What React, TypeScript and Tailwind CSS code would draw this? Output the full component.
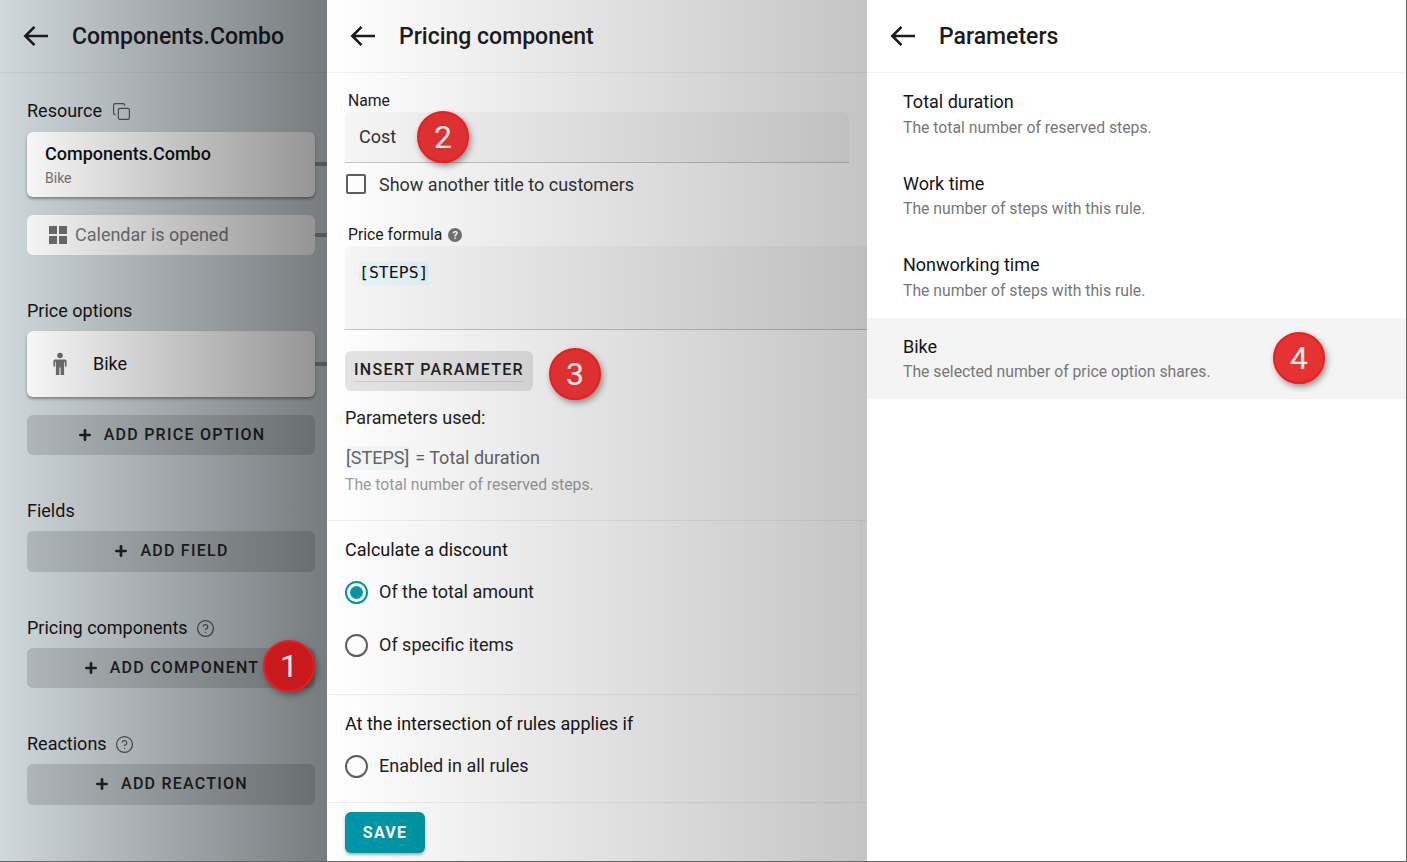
import { Plus, Copy, CircleHelp } from 'lucide-react'
import type { ReactNode } from 'react'

function Badge({ n, color, className }: { n: number; color: string; className: string }) {
  return (
    <div
      className={`absolute z-20 flex h-[52px] w-[52px] items-center justify-center rounded-full border-2 border-[#ee1c1c] text-[32px] leading-none text-white/90 shadow-[2px_3px_6px_rgba(0,0,0,0.4)] ${color} ${className}`}
    >
      {n}
    </div>
  )
}

function Header({ title }: { title: string }) {
  return (
    <div className="flex h-[73px] shrink-0 items-center border-b border-black/5 pl-6">
      <svg viewBox="0 0 26 22" className="-ml-[1px] h-[22px] w-[26px] fill-none stroke-[#1c1c1c] stroke-[2.6]">
        <path d="M25 11H2.500M11.500 1.800 2.300 11l9.200 9.200" />
      </svg>
      <span className="ml-[23px] text-[23px] font-medium leading-none text-[#1c1c1c]">{title}</span>
    </div>
  )
}

function Label({ children, className }: { children: ReactNode; className: string }) {
  return <div className={`flex h-6 items-center text-[18px] leading-6 text-[#151515] ${className}`}>{children}</div>
}

function AddButton({ label, h, className }: { label: string; h: string; className: string }) {
  return (
    <div className={`flex w-[288px] items-center justify-center gap-[11px] rounded-md bg-black/[0.13] pb-[1px] text-[16px] font-medium tracking-[1.25px] text-[#222] ${h} ${className}`}>
      <Plus className="h-4 w-4" strokeWidth={4} />
      {label}
    </div>
  )
}

function Stub({ y }: { y: string }) {
  return <div className={`absolute left-[315px] h-1 w-3 bg-black/30 ${y}`} />
}

function Radio({ checked, label, className }: { checked?: boolean; label: string; className: string }) {
  return (
    <div className={`flex h-6 items-center text-[18px] text-[#222] ${className}`}>
      <span className={`flex h-[23px] w-[23px] items-center justify-center rounded-full border-2 ${checked ? 'border-[#0097a7]' : 'border-[#5f5f5f]'}`}>
        {checked && <span className="h-[13px] w-[13px] rounded-full bg-[#0097a7]" />}
      </span>
      <span className="mb-[2px] ml-[11px]">{label}</span>
    </div>
  )
}

function ParamItem({ title, desc, active }: { title: string; desc: string; active?: boolean }) {
  return (
    <div className={`h-[81.5px] pl-9 pt-[17px] ${active ? 'bg-[#f4f4f4]' : ''}`}>
      <div className="text-[18px] leading-6 text-[#151515]">{title}</div>
      <div className="mt-[3.5px] text-[15.75px] leading-5 text-[#777]">{desc}</div>
    </div>
  )
}

export default function App() {
  return (
    <div className="relative flex h-[862px] w-[1407px] overflow-hidden border-b border-r border-[#666] bg-white font-['Roboto',sans-serif]">
      {/* left drawer, dimmed */}
      <div className="relative flex w-[327px] shrink-0 flex-col bg-[#cfd8dc]">
        <div className="pointer-events-none absolute inset-0 z-10 bg-gradient-to-r from-black/0 to-black/[0.43]" />
        <Header title="Components.Combo" />
        <div className="flex flex-col px-[27px]">
          <Label className="mt-[26px]">
            Resource
            <Copy className="ml-[10px] h-[19px] w-[19px] text-[#555]" strokeWidth={1.5} />
          </Label>
          <div className="mt-[9px] h-[65px] w-[288px] rounded-md bg-white pl-[18px] pt-[10px] shadow-[0_2px_3px_rgba(0,0,0,0.35)]">
            <div className="text-[18px] font-medium leading-6 text-[#111]">Components.Combo</div>
            <div className="mt-[2px] text-[14px] leading-5 text-[#777]">Bike</div>
          </div>
          <div className="mt-[18px] flex h-10 w-[288px] items-center rounded-md bg-white/95 pb-[1px] pl-[22px] text-[18px] text-[#777]">
            <div className="grid h-[18px] w-[18px] grid-cols-2 gap-[2px]">
              <span className="bg-[#6f6f6f]" />
              <span className="bg-[#6f6f6f]" />
              <span className="bg-[#6f6f6f]" />
              <span className="bg-[#6f6f6f]" />
            </div>
            <span className="ml-[8px]">Calendar is opened</span>
          </div>
          <Label className="mt-[44px]">Price options</Label>
          <div className="mt-2 flex h-[66px] w-[288px] items-center rounded-md bg-white pb-[1px] pl-[25px] text-[18px] text-[#151515] shadow-[0_2px_3px_rgba(0,0,0,0.35)]">
            <svg viewBox="0 0 16 24" className="h-[24px] w-4 fill-[#6f6f6f]">
              <circle cx="8" cy="3.5" r="2.8" />
              <path d="M3.500 7.500h9A1.800 1.800 0 0 1 14.600 9.300v5.200h-1.700V10h-.8v13H8.600v-7.400H7.400V23H3.900V10h-.8v4.500H1.400V9.300A1.800 1.800 0 0 1 3.500 7.500z" />
            </svg>
            <span className="ml-[25px]">Bike</span>
          </div>
          <AddButton label="ADD PRICE OPTION" h="h-10" className="mt-[18px]" />
          <Label className="mt-[44px]">Fields</Label>
          <AddButton label="ADD FIELD" h="h-[41px]" className="mt-2" />
          <Label className="mt-[44px]">
            Pricing components
            <CircleHelp className="ml-[8px] h-[19px] w-[19px] text-[#555]" strokeWidth={1.6} />
          </Label>
          <AddButton label="ADD COMPONENT" h="h-10" className="mt-2" />
          <Label className="mt-[44px]">
            Reactions
            <CircleHelp className="ml-[8px] h-[19px] w-[19px] text-[#555]" strokeWidth={1.6} />
          </Label>
          <AddButton label="ADD REACTION" h="h-[41px]" className="mt-2" />
        </div>
        <Stub y="top-[162px]" />
        <Stub y="top-[233px]" />
        <Stub y="top-[362px]" />
        <Badge n={1} color="bg-[#c81a1c]" className="left-[263px] top-[640px]" />
      </div>

      {/* middle drawer */}
      <div className="relative flex w-[540px] shrink-0 flex-col bg-white">
        <div className="pointer-events-none absolute inset-0 z-10 bg-gradient-to-r from-black/0 to-black/[0.23]" />
        <Header title="Pricing component" />
        <div className="pl-[18px]">
          <div className="ml-[3px] mt-[18px] h-5 text-[15.75px] leading-5 text-[#1c1c1c]">Name</div>
          <div className="mt-[1px] flex h-[51px] w-[504px] items-center rounded-t-md border-b border-black/20 bg-black/[0.03] pb-[1px] pl-[14px] text-[18px] text-[#333]">
            Cost
          </div>
          <div className="mt-[11px] flex h-5 items-center text-[18px] text-[#333]">
            <span className="ml-[1px] h-5 w-5 rounded-[2px] border-2 border-[#5f5f5f]" />
            <span className="ml-[13px]">Show another title to customers</span>
          </div>
          <div className="ml-[3px] mt-[31px] flex h-5 items-center text-[15.75px] text-[#1c1c1c]">
            Price formula
            <span className="ml-[6px] flex h-[14px] w-[14px] items-center justify-center rounded-full bg-[#757575] text-[11px] font-bold leading-none text-white">?</span>
          </div>
          <div className="mt-[1px] h-[84px] rounded-tl-md border-b border-black/20 bg-black/[0.03] pl-[14px] pt-[15px]">
            <span className="inline-block rounded-[3px] bg-[#e6f6fb] font-['DejaVu_Sans_Mono',monospace] text-[16.5px] leading-6 text-[#111]">
              [STEPS]
            </span>
          </div>
          <div className="mt-[21px] flex h-10 w-[188px] items-center justify-center rounded-md bg-black/10 pb-[2px] text-[16px] font-medium tracking-[1.25px] text-[#222]">
            <span className="border-b border-[#b5d4de] pb-[1px] leading-[21px]">INSERT PARAMETER</span>
          </div>
          <div className="mt-[15px] text-[18px] leading-6 text-[#222]">Parameters used:</div>
          <div className="mt-[16px] flex pl-[1px] text-[18px] leading-6 text-[#666]">
            <span className="bg-[#e9f4f8]/50">[STEPS]</span>
            <span className="ml-[6px]">= Total duration</span>
          </div>
          <div className="mt-[5px] text-[15.75px] leading-5 text-[#9c9c9c]">The total number of reserved steps.</div>
        </div>
        <div className="mt-[25px] border-t border-black/[0.06] pl-[18px]">
          <div className="mt-[17px] text-[18px] leading-6 text-[#151515]">Calculate a discount</div>
          <Radio checked label="Of the total amount" className="mt-[18px]" />
          <Radio label="Of specific items" className="mt-[29px]" />
        </div>
        <div className="mt-[37px] w-[533px] border-t border-black/[0.06] pl-[18px]">
          <div className="mt-[17px] text-[18px] leading-6 text-[#151515]">At the intersection of rules applies if</div>
          <Radio label="Enabled in all rules" className="mt-[18px]" />
        </div>
        <div className="mt-[24px] border-t border-black/[0.06] pl-[18px] pt-[9px]">
          <div className="flex h-[41px] w-[80px] items-center justify-center rounded-md bg-[#0097a7] text-[16px] font-bold tracking-[1.25px] text-white shadow-[0_2px_3px_rgba(0,0,0,0.3)]">
            SAVE
          </div>
        </div>
        {/* scrollbar track edge */}
        <div className="absolute left-[534px] top-[520px] h-[282px] w-[6px] border-l border-black/[0.04]">
          <div className="mt-[126px] border-t border-black/[0.04]" />
        </div>
        <Badge n={2} color="bg-[#dd3030]" className="left-[90px] top-[111px]" />
        <Badge n={3} color="bg-[#dd3030]" className="left-[222px] top-[348px]" />
      </div>

      {/* right drawer */}
      <div className="relative flex min-w-0 flex-1 flex-col">
        <Header title="Parameters" />
        <div>
          <ParamItem title="Total duration" desc="The total number of reserved steps." />
          <ParamItem title="Work time" desc="The number of steps with this rule." />
          <ParamItem title="Nonworking time" desc="The number of steps with this rule." />
          <ParamItem active title="Bike" desc="The selected number of price option shares." />
        </div>
        <Badge n={4} color="bg-[#e53333]" className="left-[406px] top-[332px]" />
      </div>
    </div>
  )
}
